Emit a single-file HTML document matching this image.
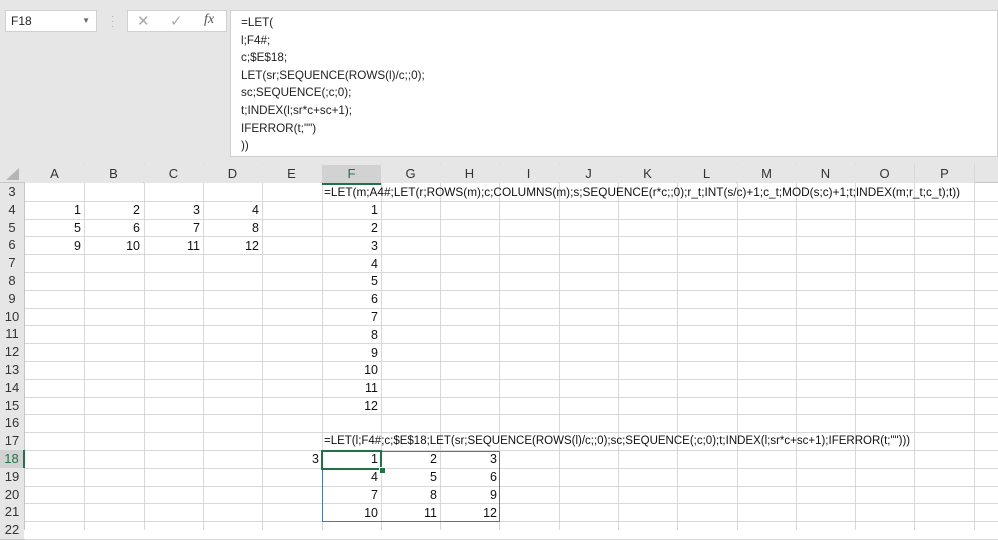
<!DOCTYPE html>
<html><head><style>
body{margin:0;width:998px;height:530px;overflow:hidden;background:#fff;font-family:"Liberation Sans",sans-serif;position:relative}
.a{position:absolute}
.top{left:0;top:0;width:998px;height:164px;background:#e6e6e6}
.nb{left:5px;top:10px;width:92px;height:22px;background:#fff;border:1px solid #d0d0d0;box-sizing:border-box;font-size:12px;line-height:20px;padding-left:5px;color:#222}
.fb{left:127px;top:10px;width:100px;height:22px;background:#fff;border:1px solid #d0d0d0;box-sizing:border-box}
.fx{left:230px;top:10px;width:768px;height:147px;background:#fff;border:1px solid #d0d0d0;box-sizing:border-box;font-size:11.7px;color:#222;padding:3px 0 0 10px;line-height:17.6px}
.hdr{background:#e6e6e6;color:#333;font-size:13px;text-align:center}
.c{font-size:12.5px;color:#111;text-align:right;height:18px;line-height:18px}
.t{font-size:12.5px;color:#111;white-space:nowrap;height:18px;line-height:18px}
</style></head><body>
<div class="a top"></div>
<div class="a nb">F18<span style="position:absolute;right:6px;top:0;font-size:8px;color:#666">▼</span></div>
<div class="a" style="left:111px;top:14px;color:#aaa;font-size:10px;line-height:5px">·<br>·<br>·</div>
<div class="a fb"><span class="a" style="left:9px;top:1px;color:#aaa;font-size:15px">✕</span><span class="a" style="left:42px;top:1px;color:#aaa;font-size:15px">✓</span><span class="a" style="left:76px;top:1px;color:#555;font-size:14px;font-style:italic;font-family:'Liberation Serif',serif">fx</span></div>
<div class="a fx">=LET(<br>l;F4#;<br>c;$E$18;<br>LET(sr;SEQUENCE(ROWS(l)/c;;0);<br>sc;SEQUENCE(;c;0);<br>t;INDEX(l;sr*c+sc+1);<br>IFERROR(t;"")<br>))</div>
<div id="g"></div>
<div class="a t" style="left:324px;top:183px;font-size:11.8px">=LET(m;A4#;LET(r;ROWS(m);c;COLUMNS(m);s;SEQUENCE(r*c;;0);r_t;INT(s/c)+1;c_t;MOD(s;c)+1;t;INDEX(m;r_t;c_t);t))</div>
<div class="a t" style="left:324px;top:432px;font-size:11.5px">=LET(l;F4#;c;$E$18;LET(sr;SEQUENCE(ROWS(l)/c;;0);sc;SEQUENCE(;c;0);t;INDEX(l;sr*c+sc+1);IFERROR(t;"")))</div>
<script>
var g=document.getElementById('g'),h='';
var L=25,W=59.3,T=183,R=17.8,cols='ABCDEFGHIJKLMNOP';
h+='<div class="a hdr" style="left:0;top:164px;width:998px;height:19px;border-bottom:1px solid #c6c6c6;box-sizing:border-box"></div>';
h+='<div class="a hdr" style="left:0;top:183px;width:25px;height:347px;border-right:1px solid #c6c6c6;box-sizing:border-box"></div>';
h+='<div class="a" style="left:6px;top:168px;width:0;height:0;border-left:13px solid transparent;border-bottom:12px solid #b5b5b5"></div>';
for(var i=0;i<17;i++){var x=L+i*W;
 h+='<div class="a" style="left:'+Math.round(x+W)+'px;top:164px;width:1px;height:366px;background:#d9d9d9"></div>';
 if(i<16)h+='<div class="a hdr" style="left:'+Math.round(x)+'px;top:165px;width:'+Math.round(W)+'px;line-height:18px;'+(i==5?'background:#d2d2d2;border-bottom:2px solid #217346;box-sizing:border-box;color:#217346':'')+'">'+cols[i]+'</div>';}
for(var r=3;r<=22;r++){var y=T+(r-3)*R;
 h+='<div class="a" style="left:25px;top:'+Math.round(y+R)+'px;width:973px;height:1px;background:#d9d9d9"></div>';
 h+='<div class="a" style="left:0;top:'+Math.round(y+R)+'px;width:25px;height:1px;background:#c6c6c6"></div>';
 h+='<div class="a hdr" style="left:0;top:'+Math.round(y)+'px;width:24px;line-height:18px;'+(r==18?'background:#d2d2d2;color:#217346;border-right:2px solid #217346;box-sizing:border-box;width:25px':'')+'">'+r+'</div>';}
h+='<div class="a" style="left:322px;top:451px;width:178px;height:71px;border:1px solid #4a78a8;box-sizing:border-box"></div>';
h+='<div class="a" style="left:321px;top:450px;width:61px;height:20px;border:2px solid #217346;box-sizing:border-box"></div>';
h+='<div class="a" style="left:379px;top:467px;width:5px;height:5px;background:#217346;border:1px solid #fff"></div>';
g.innerHTML=h;
</script>
<div class="a c" style="left:25px;top:201px;width:56px">1</div>
<div class="a c" style="left:84px;top:201px;width:56px">2</div>
<div class="a c" style="left:144px;top:201px;width:56px">3</div>
<div class="a c" style="left:203px;top:201px;width:56px">4</div>
<div class="a c" style="left:25px;top:219px;width:56px">5</div>
<div class="a c" style="left:84px;top:219px;width:56px">6</div>
<div class="a c" style="left:144px;top:219px;width:56px">7</div>
<div class="a c" style="left:203px;top:219px;width:56px">8</div>
<div class="a c" style="left:25px;top:237px;width:56px">9</div>
<div class="a c" style="left:84px;top:237px;width:56px">10</div>
<div class="a c" style="left:144px;top:237px;width:56px">11</div>
<div class="a c" style="left:203px;top:237px;width:56px">12</div>
<div class="a c" style="left:322px;top:201px;width:56px">1</div>
<div class="a c" style="left:322px;top:219px;width:56px">2</div>
<div class="a c" style="left:322px;top:237px;width:56px">3</div>
<div class="a c" style="left:322px;top:255px;width:56px">4</div>
<div class="a c" style="left:322px;top:272px;width:56px">5</div>
<div class="a c" style="left:322px;top:290px;width:56px">6</div>
<div class="a c" style="left:322px;top:308px;width:56px">7</div>
<div class="a c" style="left:322px;top:326px;width:56px">8</div>
<div class="a c" style="left:322px;top:344px;width:56px">9</div>
<div class="a c" style="left:322px;top:361px;width:56px">10</div>
<div class="a c" style="left:322px;top:379px;width:56px">11</div>
<div class="a c" style="left:322px;top:397px;width:56px">12</div>
<div class="a c" style="left:262px;top:450px;width:57px">3</div>
<div class="a c" style="left:322px;top:450px;width:56px">1</div>
<div class="a c" style="left:381px;top:450px;width:56px">2</div>
<div class="a c" style="left:441px;top:450px;width:56px">3</div>
<div class="a c" style="left:322px;top:468px;width:56px">4</div>
<div class="a c" style="left:381px;top:468px;width:56px">5</div>
<div class="a c" style="left:441px;top:468px;width:56px">6</div>
<div class="a c" style="left:322px;top:486px;width:56px">7</div>
<div class="a c" style="left:381px;top:486px;width:56px">8</div>
<div class="a c" style="left:441px;top:486px;width:56px">9</div>
<div class="a c" style="left:322px;top:504px;width:56px">10</div>
<div class="a c" style="left:381px;top:504px;width:56px">11</div>
<div class="a c" style="left:441px;top:504px;width:56px">12</div>
</body></html>
